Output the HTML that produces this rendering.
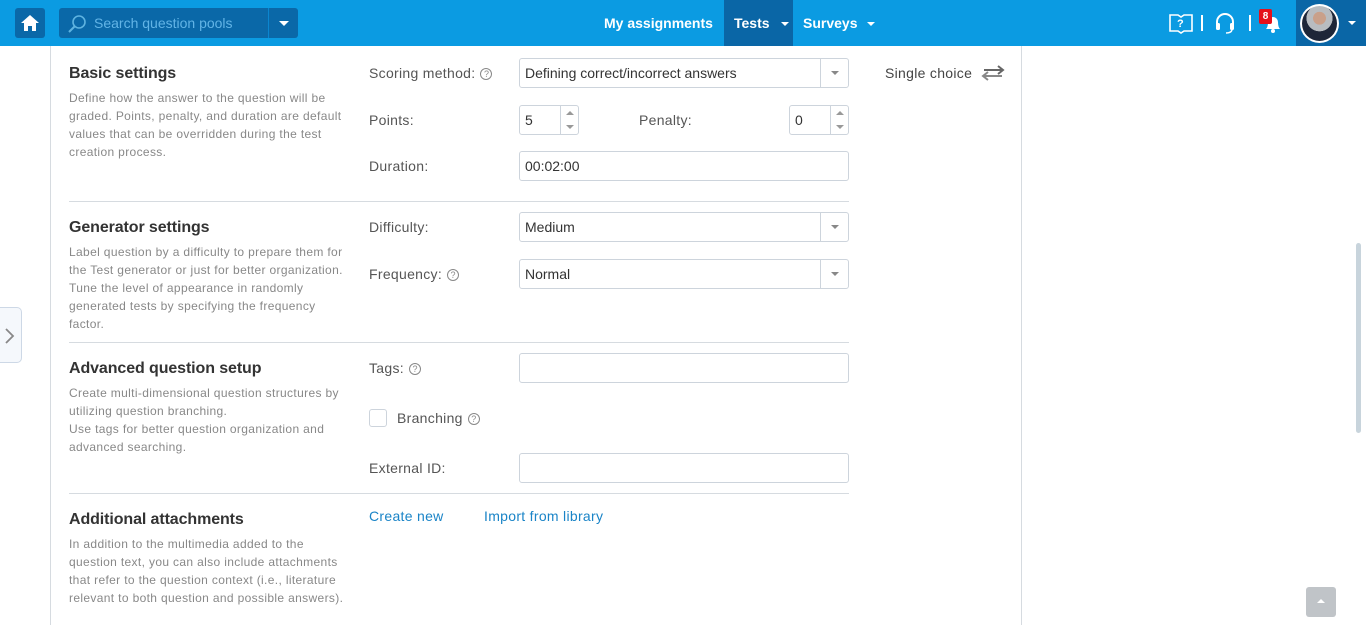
<!DOCTYPE html>
<html><head><meta charset="utf-8"><style>
*{box-sizing:border-box;margin:0;padding:0}
body{width:1366px;height:625px;overflow:hidden;background:#fff;font-family:"Liberation Sans",sans-serif;position:relative;color:#444}
.nav{position:absolute;left:0;top:0;width:1366px;height:46px;background:#0b9be2}
.abs{position:absolute}
.h{font-size:16px;font-weight:bold;color:#333;letter-spacing:-0.1px}
.d{font-size:12px;color:#888;line-height:18px;white-space:nowrap;letter-spacing:0.35px}
.l{font-size:14px;color:#555;letter-spacing:0.3px}
.in{position:absolute;border:1px solid #cdd4dc;border-radius:3px;height:30px;font-size:14px;color:#333;padding:6px 5px;background:#fff;letter-spacing:0px}
.dd{position:absolute;right:0;top:0;width:28px;height:28px;border-left:1px solid #cdd4dc}
.dd:after{content:"";position:absolute;left:10px;top:12px;border:4px solid transparent;border-top:4px solid #888}
.sp{position:absolute;right:0;top:0;width:18px;height:28px;border-left:1px solid #cdd4dc}
.sp:before{content:"";position:absolute;left:5px;top:5px;border:4px solid transparent;border-bottom:4px solid #999;border-top:0}
.sp:after{content:"";position:absolute;left:5px;bottom:5px;border:4px solid transparent;border-top:4px solid #999;border-bottom:0}
.hr{position:absolute;left:69px;width:780px;height:1px;background:#d6dbe0}
.q{display:inline-block;width:12px;height:12px;border:1px solid #888;border-radius:50%;font-size:9px;text-align:center;line-height:10px;color:#888;margin-left:5px;vertical-align:1px;letter-spacing:0}
.lk{font-size:14px;color:#1a84c7;letter-spacing:0.3px}
</style></head><body>
<div class="nav">
 <div class="abs" style="left:15px;top:8px;width:30px;height:30px;background:#0a68a8;border-radius:3px">
  <svg width="30" height="30"><path d="M6 15 L15 7 L24 15 H21 V23 H17 V18 H13 V23 H9 V15Z" fill="#fff"/></svg></div>
 <div class="abs" style="left:59px;top:8px;width:239px;height:30px;background:#0a68a8;border-radius:3px">
  <svg class="abs" style="left:8px;top:6px" width="20" height="20"><circle cx="12" cy="8" r="6" stroke="#5eb3e0" stroke-width="1.6" fill="none"/><path d="M8 12 L2 18" stroke="#5eb3e0" stroke-width="2"/></svg>
  <span class="abs" style="left:35px;top:7px;font-size:14px;color:#62b4e6">Search question pools</span>
  <div class="abs" style="left:209px;top:0;width:1px;height:30px;background:#0b86d0"></div>
  <div class="abs" style="left:220px;top:13px;border:5px solid transparent;border-top:5px solid #fff"></div>
 </div>
 <span class="abs" style="left:604px;top:15px;color:#fff;font-size:14px;font-weight:bold">My assignments</span>
 <div class="abs" style="left:724px;top:0;width:69px;height:46px;background:#0a66a6"></div>
 <span class="abs" style="left:734px;top:15px;color:#fff;font-size:14px;font-weight:bold">Tests</span>
 <div class="abs" style="left:781px;top:22px;border:4px solid transparent;border-top:4px solid #fff"></div>
 <span class="abs" style="left:803px;top:15px;color:#fff;font-size:14px;font-weight:bold">Surveys</span>
 <div class="abs" style="left:867px;top:22px;border:4px solid transparent;border-top:4px solid #fff"></div>
 <svg class="abs" style="left:1168px;top:10px" width="26" height="26"><path d="M2 5 H10 L13 7 L16 5 H24 V21 H16 L13 23 L10 21 H2Z" fill="none" stroke="#fff" stroke-width="1.6"/><text x="9" y="17" font-size="11" fill="#fff" font-family="Liberation Sans" font-weight="bold">?</text></svg>
 <div class="abs" style="left:1201px;top:15px;width:2px;height:16px;background:#fff"></div>
 <svg class="abs" style="left:1213px;top:11px" width="24" height="24"><path d="M4 14 V11 A8 8 0 0 1 20 11 V14" fill="none" stroke="#fff" stroke-width="2"/><rect x="3" y="12" width="4" height="7" rx="1.5" fill="#fff"/><rect x="17" y="12" width="4" height="7" rx="1.5" fill="#fff"/><path d="M19 19 Q18 22 13 22" stroke="#fff" fill="none" stroke-width="1.5"/></svg>
 <div class="abs" style="left:1249px;top:15px;width:2px;height:16px;background:#fff"></div>
 <svg class="abs" style="left:1262px;top:12px" width="22" height="22"><path d="M4 17 Q6 15 6 10 A5 5 0 0 1 16 10 Q16 15 18 17Z" fill="#fff"/><circle cx="11" cy="19" r="2" fill="#fff"/></svg>
 <div class="abs" style="left:1259px;top:9px;width:13px;height:15px;background:#e5101b;border-radius:2px;color:#fff;font-size:10px;font-weight:bold;text-align:center;line-height:15px">8</div>
 <div class="abs" style="left:1296px;top:0;width:70px;height:46px;background:#0a66a6"></div>
 <div class="abs" style="left:1300px;top:4px;width:39px;height:39px;border-radius:50%;background:#fff;padding:2px"><div style="width:35px;height:35px;border-radius:50%;background:radial-gradient(circle at 50% 35%,#c9a08a 0 22%,#b8bcc0 23% 45%,#1e2638 46%)"></div></div>
 <div class="abs" style="left:1348px;top:21px;border:4px solid transparent;border-top:4px solid #fff"></div>
</div>
<div class="abs" style="left:50px;top:46px;width:1px;height:579px;background:#d6dbe0"></div>
<div class="abs" style="left:1021px;top:46px;width:1px;height:579px;background:#d6dbe0"></div>
<div class="abs" style="left:0;top:307px;width:22px;height:56px;border:1px solid #cdd8e6;border-left:0;border-radius:0 5px 5px 0;background:#f5f8fc"><svg width="20" height="56"><path d="M6 21 L13 28 L6 35" fill="none" stroke="#888" stroke-width="1.8"/></svg></div>
<div class="abs" style="left:1356px;top:243px;width:5px;height:190px;background:#c8d4dc;border-radius:3px"></div>
<div class="abs" style="left:1306px;top:587px;width:30px;height:30px;background:#c0c4c8;border-radius:3px"><div class="abs" style="left:11px;top:12px;border:4px solid transparent;border-bottom:4px solid #fff;border-top:0"></div></div>

<div class="abs h" style="left:69px;top:65px">Basic settings</div>
<div class="abs d" style="left:69px;top:89px">Define how the answer to the question will be<br>graded. Points, penalty, and duration are default<br>values that can be overridden during the test<br>creation process.</div>
<div class="abs l" style="left:369px;top:65px">Scoring method:<span class="q">?</span></div>
<div class="in" style="left:519px;top:58px;width:330px">Defining correct/incorrect answers<div class="dd"></div></div>
<div class="abs l" style="left:885px;top:65px;color:#444">Single choice</div>
<svg class="abs" style="left:980px;top:64px" width="26" height="18"><path d="M4 6 H22 M18 2 L23 6 L18 10" fill="none" stroke="#666" stroke-width="2"/><path d="M22 12 H4 M8 8 L3 12 L8 16" fill="none" stroke="#888" stroke-width="2"/></svg>
<div class="abs l" style="left:369px;top:112px">Points:</div>
<div class="in" style="left:519px;top:105px;width:60px">5<div class="sp"></div></div>
<div class="abs l" style="left:639px;top:112px">Penalty:</div>
<div class="in" style="left:789px;top:105px;width:60px">0<div class="sp"></div></div>
<div class="abs l" style="left:369px;top:158px">Duration:</div>
<div class="in" style="left:519px;top:151px;width:330px">00:02:00</div>
<div class="hr" style="top:201px"></div>

<div class="abs h" style="left:69px;top:219px">Generator settings</div>
<div class="abs d" style="left:69px;top:243px">Label question by a difficulty to prepare them for<br>the Test generator or just for better organization.<br>Tune the level of appearance in randomly<br>generated tests by specifying the frequency<br>factor.</div>
<div class="abs l" style="left:369px;top:219px">Difficulty:</div>
<div class="in" style="left:519px;top:212px;width:330px">Medium<div class="dd"></div></div>
<div class="abs l" style="left:369px;top:266px">Frequency:<span class="q">?</span></div>
<div class="in" style="left:519px;top:259px;width:330px">Normal<div class="dd"></div></div>
<div class="hr" style="top:342px"></div>

<div class="abs h" style="left:69px;top:360px">Advanced question setup</div>
<div class="abs d" style="left:69px;top:384px">Create multi-dimensional question structures by<br>utilizing question branching.<br>Use tags for better question organization and<br>advanced searching.</div>
<div class="abs l" style="left:369px;top:360px">Tags:<span class="q">?</span></div>
<div class="in" style="left:519px;top:353px;width:330px"></div>
<div class="abs" style="left:369px;top:409px;width:18px;height:18px;border:1px solid #cdd4dc;border-radius:3px"></div>
<div class="abs l" style="left:397px;top:410px">Branching<span class="q">?</span></div>
<div class="abs l" style="left:369px;top:460px">External ID:</div>
<div class="in" style="left:519px;top:453px;width:330px"></div>
<div class="hr" style="top:493px"></div>

<div class="abs h" style="left:69px;top:511px">Additional attachments</div>
<div class="abs d" style="left:69px;top:535px">In addition to the multimedia added to the<br>question text, you can also include attachments<br>that refer to the question context (i.e., literature<br>relevant to both question and possible answers).</div>
<div class="abs lk" style="left:369px;top:508px">Create new</div>
<div class="abs lk" style="left:484px;top:508px">Import from library</div>
</body></html>
